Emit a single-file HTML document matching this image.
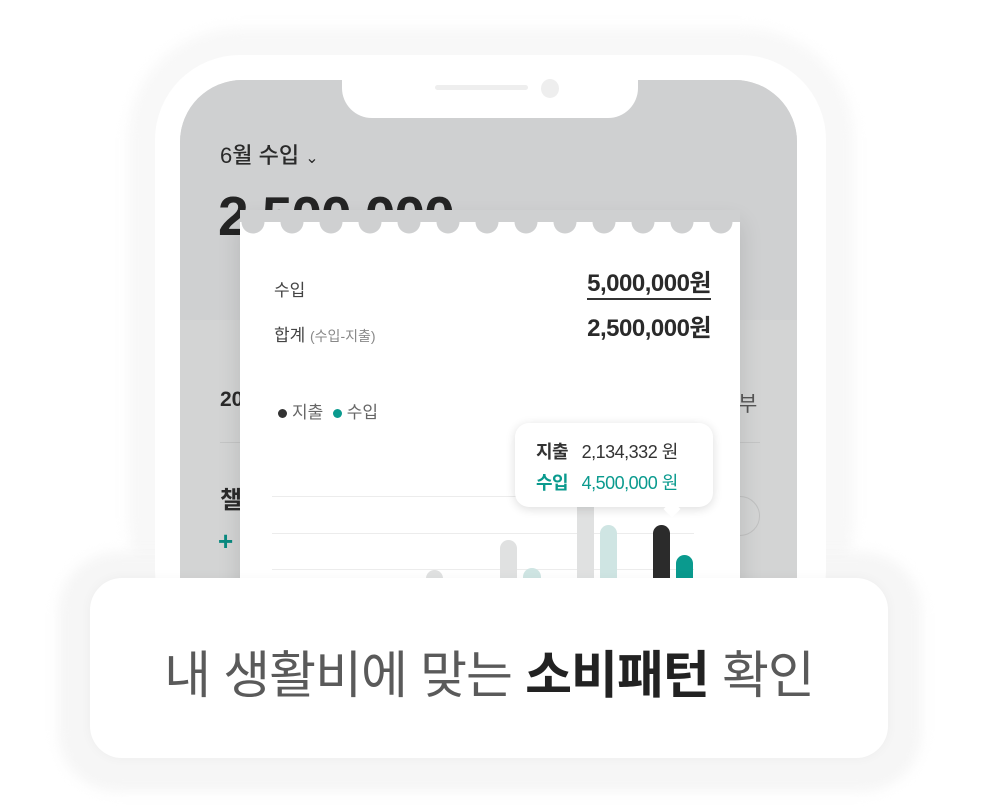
<!DOCTYPE html>
<html><head><meta charset="utf-8"><style>
*{margin:0;padding:0;box-sizing:border-box}
body{width:981px;height:810px;background:#fff;position:relative;overflow:hidden;font-family:"Liberation Sans","Noto Sans CJK KR",sans-serif}
.a{position:absolute}
</style></head><body>
<div class="a" style="left:128px;top:28px;width:726px;height:600px;border-radius:110px;background:#f8f8f8;filter:blur(6px)"></div>
<div class="a" style="left:58px;top:552px;width:864px;height:240px;border-radius:60px;background:#f6f6f6;filter:blur(6px)"></div>
<div class="a" style="left:155px;top:55px;width:671px;height:600px;border-radius:85px;background:#fff"></div>
<div class="a" style="left:180px;top:80px;width:617px;height:560px;border-radius:62px 62px 0 0;background:#d3d4d4;overflow:hidden">
  <div class="a" style="left:0;top:0;width:617px;height:240px;background:#cfd0d1"></div>
  <div class="a" style="left:40px;top:58px;font-size:22px;color:#2a2a2a;font-weight:500">6월 수입 <span style="font-size:16px">&#8964;</span></div>
  <div class="a" style="left:38px;top:104px;font-size:55px;font-weight:bold;color:#242424;letter-spacing:-1px">2,500,000<span style="font-size:22px;font-weight:normal">원</span></div>
  <div class="a" style="left:40px;top:308px;font-size:21px;font-weight:bold;color:#2a2a2a">20</div>
  <div class="a" style="left:558px;top:308px;font-size:21px;color:#555">부</div>
  <div class="a" style="left:40px;top:362px;width:540px;height:1px;background:#c4c5c5"></div>
  <div class="a" style="left:40px;top:400px;font-size:24px;font-weight:bold;color:#2a2a2a">챌</div>
  <div class="a" style="left:38px;top:446px;font-size:26px;font-weight:bold;color:#0a8a80">+</div>
  <div class="a" style="left:540px;top:416px;width:40px;height:40px;border-radius:50%;border:1px solid #c0c1c1"></div>
</div>
<div class="a" style="left:342px;top:78px;width:296px;height:40px;background:#fff;border-radius:0 0 30px 30px"></div>
<div class="a" style="left:435px;top:85px;width:93px;height:5px;border-radius:3px;background:#eee"></div>
<div class="a" style="left:541px;top:79px;width:18px;height:19px;border-radius:50%;background:#eee"></div>
<div class="a" style="left:240px;top:222px;width:500px;height:380px;background:#fff;box-shadow:0 0 22px rgba(0,0,0,.12)"></div>
<svg class="a" style="left:240px;top:210px" width="500" height="24">
<g fill="#cfd0d1">
<circle cx="13" cy="12" r="11.5"/><circle cx="52" cy="12" r="11.5"/><circle cx="91" cy="12" r="11.5"/><circle cx="130" cy="12" r="11.5"/><circle cx="169" cy="12" r="11.5"/><circle cx="208" cy="12" r="11.5"/><circle cx="247" cy="12" r="11.5"/><circle cx="286" cy="12" r="11.5"/><circle cx="325" cy="12" r="11.5"/><circle cx="364" cy="12" r="11.5"/><circle cx="403" cy="12" r="11.5"/><circle cx="442" cy="12" r="11.5"/><circle cx="481" cy="12" r="11.5"/></g>
<rect x="0" y="0" width="500" height="12" fill="#cfd0d1"/>
</svg>
<div class="a" style="left:274px;top:276px;font-size:17px;color:#444">수입</div>
<div class="a" style="right:270px;top:270px;font-size:24px;font-weight:bold;color:#2a2a2a;letter-spacing:-.5px;border-bottom:2px solid #333;line-height:28px;white-space:nowrap">5,000,000원</div>
<div class="a" style="left:274px;top:321px;font-size:17px;color:#444">합계 <span style="font-size:14px;color:#888">(수입-지출)</span></div>
<div class="a" style="right:270px;top:315px;font-size:24px;font-weight:bold;color:#2a2a2a;letter-spacing:-.5px;line-height:28px;white-space:nowrap">2,500,000원</div>
<div class="a" style="left:278px;top:398px;font-size:17px;color:#666"><span style="display:inline-block;width:9px;height:9px;border-radius:50%;background:#333;margin-right:5px"></span>지출 &nbsp;<span style="display:inline-block;width:9px;height:9px;border-radius:50%;background:#0a9a8e;margin-right:5px"></span>수입</div>
<div class="a" style="left:272px;top:496px;width:422px;height:1px;background:#ececec"></div>
<div class="a" style="left:272px;top:533px;width:422px;height:1px;background:#ececec"></div>
<div class="a" style="left:272px;top:569px;width:422px;height:1px;background:#ececec"></div>
<div class="a" style="left:426px;top:570px;width:17px;height:40px;border-radius:9px 9px 0 0;background:#e0e1e1"></div>
<div class="a" style="left:500px;top:540px;width:17px;height:70px;border-radius:9px 9px 0 0;background:#e0e1e1"></div>
<div class="a" style="left:523px;top:568px;width:18px;height:40px;border-radius:9px 9px 0 0;background:#cfe5e3"></div>
<div class="a" style="left:577px;top:490px;width:17px;height:120px;background:#e0e1e1"></div>
<div class="a" style="left:600px;top:525px;width:17px;height:80px;border-radius:9px 9px 0 0;background:#cfe5e3"></div>
<div class="a" style="left:653px;top:525px;width:17px;height:80px;border-radius:9px 9px 0 0;background:#2b2b2b"></div>
<div class="a" style="left:676px;top:555px;width:17px;height:50px;border-radius:9px 9px 0 0;background:#0a9a8e"></div>
<div class="a" style="left:515px;top:423px;width:198px;height:84px;border-radius:14px;background:#fff;box-shadow:0 2px 10px rgba(0,0,0,.14)"></div>
<div class="a" style="left:666px;top:503px;width:12px;height:12px;background:#fff;transform:rotate(45deg)"></div>
<div class="a" style="left:536px;top:438px;font-size:18px;color:#333;white-space:nowrap;letter-spacing:-.5px"><b>지출</b>&nbsp;&nbsp; 2,134,332 원</div>
<div class="a" style="left:536px;top:469px;font-size:18px;color:#0a9a8e;white-space:nowrap;letter-spacing:-.5px"><b>수입</b>&nbsp;&nbsp; 4,500,000 원</div>
<div class="a" style="left:90px;top:578px;width:798px;height:180px;border-radius:32px;background:#fff;box-shadow:0 0 12px rgba(0,0,0,.04)"></div>
<div class="a" style="left:90px;top:634px;width:798px;text-align:center;font-size:51px;color:#5a5a5a;letter-spacing:-1px;white-space:nowrap">내 생활비에 맞는 <b style="color:#222">소비패턴</b> 확인</div>
</body></html>
